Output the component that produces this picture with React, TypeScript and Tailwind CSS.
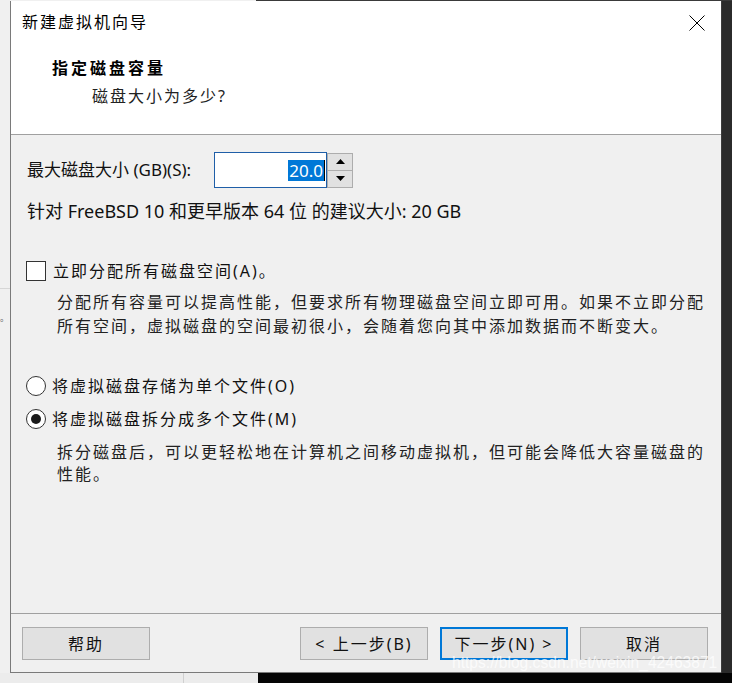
import React from "react";

const font = "font-['Noto_Sans','Noto_Sans_CJK_SC',sans-serif]";

function Btn({ children, primary }: { children: React.ReactNode; primary?: boolean }) {
  return (
    <div
      className={
        "w-[128px] h-[33px] flex items-center justify-center bg-[#e1e1e1] text-[16px] tracking-[2px] text-[#111] " +
        (primary ? "border-2 border-[#0078d7]" : "border border-[#adadad]")
      }
    >
      {children}
    </div>
  );
}

export default function App() {
  return (
    <div className={"w-[732px] h-[683px] overflow-hidden flex flex-col bg-[#f0f0f0] text-[#111] " + font}>
      {/* top 1px row */}
      <div className="h-px flex shrink-0">
        <div className="w-[256px] bg-[#f0f0f0]" />
        <div className="flex-1 bg-[#3a3a3a]" />
      </div>

      {/* main row */}
      <div className="h-[672px] flex shrink-0">
        {/* left background strip */}
        <div className="w-[10px] flex flex-col overflow-hidden bg-[#f0f0f0]">
          <div className="h-[287px]" />
          <div className="h-px bg-[#d6d6d6]" />
          <div className="mt-[24px] text-[9px] leading-none text-[#666] whitespace-nowrap">。</div>
        </div>

        {/* dialog */}
        <div className="w-[711px] relative overflow-hidden flex flex-col bg-[#f0f0f0] border-l border-b border-[#7a7a7a]">
          {/* header */}
          <div className="h-[134px] shrink-0 bg-white border-b border-[#a0a0a0] flex flex-col">
            <div className="h-[42px] flex items-center justify-between pl-[11px] pr-[16px]">
              <span className="text-[16px] tracking-[2px] text-black">新建虚拟机向导</span>
              <svg width="16" height="16" viewBox="0 0 16 16" className="mt-[1px]">
                <path d="M0.5 0.5 L15.5 15.5 M15.5 0.5 L0.5 15.5" stroke="#000" strokeWidth="1" fill="none" />
              </svg>
            </div>
            <div className="mt-[14px] h-[22px] leading-[22px] pl-[41px] text-[16px] font-bold tracking-[3px] text-black">
              指定磁盘容量
            </div>
            <div className="mt-[6px] h-[22px] leading-[22px] pl-[81px] text-[16px] tracking-[2px] text-[#222]">
              磁盘大小为多少?
            </div>
          </div>

          {/* body */}
          <div className="flex-1 flex flex-col">
            <div className="mt-[17px] h-[36px] flex items-center pl-[16px]">
              <span className="w-[187px] text-[17px] whitespace-nowrap">最大磁盘大小 (GB)(S):</span>
              <div className="w-[113px] h-[36px] bg-white border border-[#1f5fa8] flex items-center justify-end pr-[1px]">
                <span className="bg-[#0078d7] text-white text-[17px] leading-[21px] h-[21px] px-px">20.0</span>
                <span className="w-px h-[21px] bg-black" />
              </div>
              <div className="w-[26px] h-[35px] flex flex-col">
                <div className="flex-1 bg-[#e1e1e1] border border-[#adadad] flex items-center justify-center">
                  <svg width="9" height="5" viewBox="0 0 9 5">
                    <polygon points="0,5 4.5,0 9,5" fill="#000" />
                  </svg>
                </div>
                <div className="flex-1 bg-[#e1e1e1] border border-[#adadad] border-t-0 flex items-center justify-center">
                  <svg width="9" height="5" viewBox="0 0 9 5">
                    <polygon points="0,0 4.5,5 9,0" fill="#000" />
                  </svg>
                </div>
              </div>
            </div>

            <div className="mt-[13px] h-[20px] flex items-center pl-[16px] text-[18px] whitespace-nowrap">
              针对 FreeBSD 10 和更早版本 64 位 的建议大小: 20 GB
            </div>

            <div className="mt-[40px] h-[20px] flex items-center pl-[15px] gap-[7px]">
              <div className="w-[20px] h-[20px] border border-[#333] bg-white" />
              <span className="text-[16px] tracking-[2px] whitespace-nowrap">立即分配所有磁盘空间(A)。</span>
            </div>

            <div className="mt-[9px] pl-[46px] text-[16px] leading-[24px] tracking-[2px] text-[#222] whitespace-nowrap">
              <div>分配所有容量可以提高性能，但要求所有物理磁盘空间立即可用。如果不立即分配</div>
              <div>所有空间，虚拟磁盘的空间最初很小，会随着您向其中添加数据而不断变大。</div>
            </div>

            <div className="mt-[38px] h-[20px] flex items-center pl-[15px] gap-[6px]">
              <div className="w-[20px] h-[20px] rounded-full border border-[#333] bg-white" />
              <span className="text-[16px] tracking-[2px] whitespace-nowrap">将虚拟磁盘存储为单个文件(O)</span>
            </div>

            <div className="mt-[13px] h-[20px] flex items-center pl-[15px] gap-[6px]">
              <div className="w-[20px] h-[20px] rounded-full border border-[#333] bg-white flex items-center justify-center">
                <div className="w-[10px] h-[10px] rounded-full bg-[#1a1a1a]" />
              </div>
              <span className="text-[16px] tracking-[2px] whitespace-nowrap">将虚拟磁盘拆分成多个文件(M)</span>
            </div>

            <div className="mt-[12px] pl-[46px] text-[16px] leading-[22px] tracking-[2px] text-[#222] whitespace-nowrap">
              <div>拆分磁盘后，可以更轻松地在计算机之间移动虚拟机，但可能会降低大容量磁盘的</div>
              <div>性能。</div>
            </div>
          </div>

          {/* footer */}
          <div className="h-[59px] shrink-0 border-t border-[#a0a0a0]">
            <div className="mt-[13px] flex justify-between pl-[11px] pr-[13px]">
              <Btn>帮助</Btn>
              <div className="flex gap-3">
                <Btn>&lt; 上一步(B)</Btn>
                <Btn primary>下一步(N) &gt;</Btn>
                <Btn>取消</Btn>
              </div>
            </div>
          </div>

          {/* watermark */}
          <div className="absolute left-[441px] top-[654px] text-[15.6px] leading-none text-white/75 font-['Liberation_Sans',sans-serif] whitespace-nowrap">
            https://blog.csdn.net/weixin_42463871
          </div>
        </div>

        {/* right dark strip */}
        <div className="flex-1 bg-[#2b2b2b] border-l border-[#3d3d3d]" />
      </div>

      {/* bottom row */}
      <div className="flex-1 flex">
        <div className="w-[258px] flex bg-[#ececec]">
          <div className="w-[183px]" />
          <div className="w-px bg-[#d0d0d0]" />
        </div>
        <div className="flex-1 bg-[#050505]" />
      </div>
    </div>
  );
}
